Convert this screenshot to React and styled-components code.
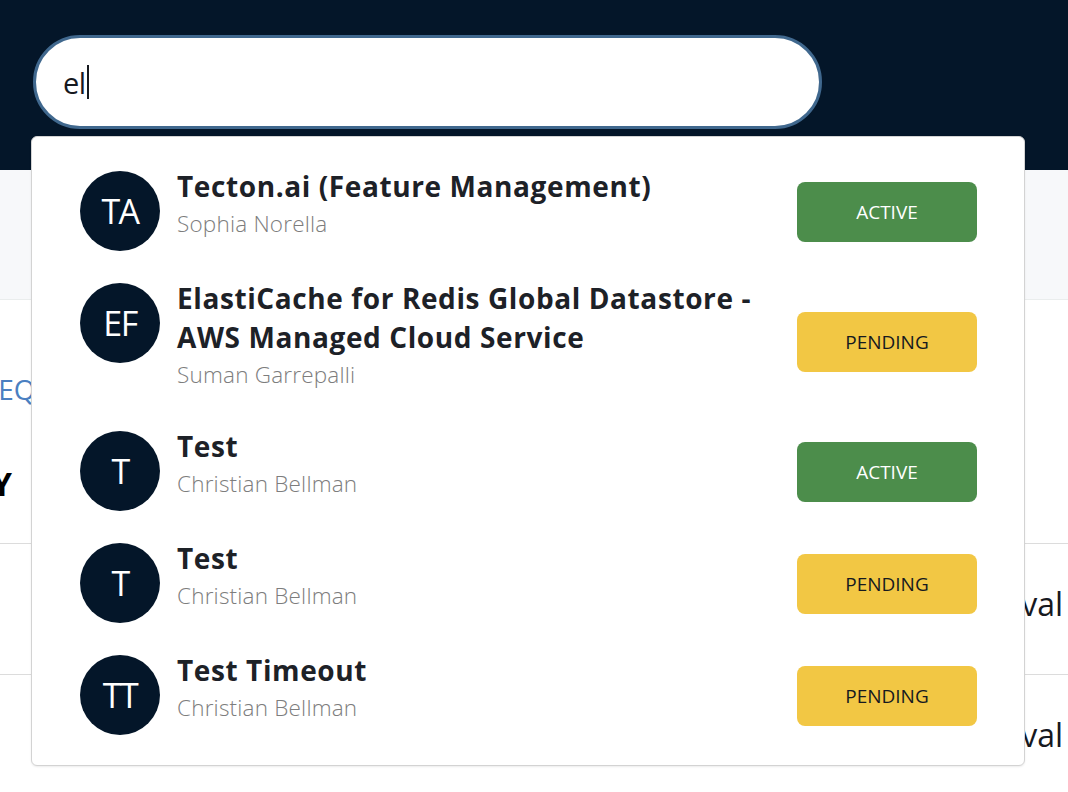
import styled, { createGlobalStyle } from "styled-components";

const GlobalStyle = createGlobalStyle`
  html, body {
    margin: 0;
    padding: 0;
    overflow: hidden;
    background: #ffffff;
    font-family: "Open Sans", "Noto Sans", sans-serif;
    color: #16191f;
  }
`;

const Page = styled.div`
  position: relative;
  width: 1068px;
  height: 792px;
  overflow: hidden;
`;

const Header = styled.header`
  height: 170px;
  box-sizing: border-box;
  padding: 35px 0 0 33px;
  background: #041629;
`;

const SearchWrap = styled.div`
  position: relative;
  width: 789px;
`;

const SearchBox = styled.div`
  height: 94px;
  box-sizing: border-box;
  display: flex;
  align-items: center;
  padding: 0 27px;
  border: 3px solid #40688e;
  border-radius: 47px;
  background: #ffffff;
  font-size: 29px;
  letter-spacing: -0.5px;
  color: #16191f;
`;

const Caret = styled.span`
  display: inline-block;
  width: 2px;
  height: 34px;
  margin-left: 1px;
  background: #16191f;
`;

const Dropdown = styled.ul`
  position: absolute;
  top: 101px;
  left: -2px;
  width: 994px;
  box-sizing: border-box;
  margin: 0;
  padding: 16px 0;
  list-style: none;
  background: #ffffff;
  border: 1px solid #d3d3d3;
  border-radius: 6px;
  box-shadow: 0 1px 2px rgba(0, 0, 0, 0.08);
  z-index: 5;
`;

const Item = styled.li`
  display: flex;
  align-items: flex-start;
  padding: 14px 47px 14px 48px;
`;

const Avatar = styled.div`
  flex: 0 0 80px;
  height: 80px;
  margin-top: 4px;
  border-radius: 50%;
  background: #041629;
  color: #ffffff;
  display: flex;
  align-items: center;
  justify-content: center;
  font-size: 34px;
  font-weight: 400;
  letter-spacing: -1.5px;
`;

const Info = styled.div`
  flex: 1;
  min-width: 0;
  margin: 0 20px 0 17px;
`;

const Title = styled.div`
  font-size: 28px;
  line-height: 39px;
  font-weight: 700;
  letter-spacing: 0.6px;
  color: #1d2127;
`;

const Owner = styled.div`
  font-size: 22.5px;
  line-height: 36px;
  margin-bottom: 6px;
  font-weight: 300;
  letter-spacing: 0.2px;
  color: #7d7d7d;
`;

const Badge = styled.div`
  flex: 0 0 180px;
  height: 60px;
  align-self: center;
  margin-top: 6px;
  border-radius: 8px;
  display: flex;
  align-items: center;
  justify-content: center;
  font-size: 19px;
  background: ${({ $status }) => ($status === "ACTIVE" ? "#4c8d4b" : "#f2c744")};
  color: ${({ $status }) => ($status === "ACTIVE" ? "#ffffff" : "#16191f")};
`;

const Band = styled.div`
  height: 129px;
  background: #f7f8fa;
  border-bottom: 1px solid #eaeded;
`;

const Content = styled.main`
  display: flex;
  flex-direction: column;
`;

const SectionLink = styled.div`
  margin: 70px 0 0 -19px;
  font-size: 28px;
  color: #4a7fc1;
  white-space: nowrap;
`;

const HeadingClip = styled.div`
  width: 12px;
  display: flex;
  justify-content: flex-end;
  margin-top: 54px;
`;

const Heading = styled.h2`
  margin: 0;
  font-size: 32px;
  font-weight: 700;
  color: #000000;
  white-space: nowrap;
`;

const Table = styled.div`
  margin-top: 38px;
  border-top: 1px solid #dcdcdc;
`;

const Row = styled.div`
  height: 131px;
  display: flex;
  align-items: center;
  justify-content: flex-end;
  padding: 0 5px 12px 0;
  box-sizing: border-box;
  border-bottom: 1px solid #dcdcdc;
  font-size: 32px;
  white-space: nowrap;
`;

const results = [
  { initials: "TA", title: "Tecton.ai (Feature Management)", owner: "Sophia Norella", status: "ACTIVE" },
  {
    initials: "EF",
    title: "ElastiCache for Redis Global Datastore - AWS Managed Cloud Service",
    owner: "Suman Garrepalli",
    status: "PENDING"
  },
  { initials: "T", title: "Test", owner: "Christian Bellman", status: "ACTIVE" },
  { initials: "T", title: "Test", owner: "Christian Bellman", status: "PENDING" },
  { initials: "TT", title: "Test Timeout", owner: "Christian Bellman", status: "PENDING" }
];

export default function App() {
  return (
    <Page>
      <GlobalStyle />
      <Header>
        <SearchWrap>
          <SearchBox>
            el
            <Caret />
          </SearchBox>
          <Dropdown>
            {results.map((r, i) => (
              <Item key={i}>
                <Avatar>{r.initials}</Avatar>
                <Info>
                  <Title>{r.title}</Title>
                  <Owner>{r.owner}</Owner>
                </Info>
                <Badge $status={r.status}>{r.status}</Badge>
              </Item>
            ))}
          </Dropdown>
        </SearchWrap>
      </Header>
      <Band />
      <Content>
        <SectionLink>REQUESTS</SectionLink>
        <HeadingClip>
          <Heading>SUMMARY</Heading>
        </HeadingClip>
        <Table>
          <Row>Pending approval</Row>
          <Row>Pending approval</Row>
        </Table>
      </Content>
    </Page>
  );
}
